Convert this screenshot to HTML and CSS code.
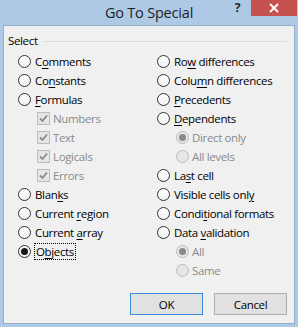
FILE: index.html
```html
<!DOCTYPE html>
<html lang="en">
<head>
    <meta charset="UTF-8">
    <title>Go To Special</title>
    <link rel="stylesheet" href="styles.css">
</head>
<body>
    <div class="window">
        <!-- Title bar -->
        <div class="titlebar">
            <div></div>
            <div class="title">Go To Special</div>
            <div class="caption-buttons">
                <span class="help">?</span>
                <span class="close">
                    <svg viewBox="0 0 10 10" width="10" height="10">
                        <path d="M1 1L9 9M9 1L1 9" stroke="#fff" stroke-width="2"/>
                    </svg>
                </span>
            </div>
        </div>

        <div class="client">
            <div class="group-label"><span>Select</span><span class="line"></span></div>

            <div class="options">
                <div class="col">
                    <label class="opt"><span class="radio"></span><span>C<u>o</u>mments</span></label>
                    <label class="opt"><span class="radio"></span><span>Co<u>n</u>stants</span></label>
                    <label class="opt"><span class="radio"></span><span><u>F</u>ormulas</span></label>
                    <label class="opt sub disabled"><span class="check">
                        <svg viewBox="0 0 11 11" width="11" height="11"><path d="M2 5.5L4.5 8L9 2.5" fill="none" stroke="#8a8a8a" stroke-width="1.8"/></svg>
                    </span><span>Numbers</span></label>
                    <label class="opt sub disabled"><span class="check">
                        <svg viewBox="0 0 11 11" width="11" height="11"><path d="M2 5.5L4.5 8L9 2.5" fill="none" stroke="#8a8a8a" stroke-width="1.8"/></svg>
                    </span><span>Text</span></label>
                    <label class="opt sub disabled"><span class="check">
                        <svg viewBox="0 0 11 11" width="11" height="11"><path d="M2 5.5L4.5 8L9 2.5" fill="none" stroke="#8a8a8a" stroke-width="1.8"/></svg>
                    </span><span>Logicals</span></label>
                    <label class="opt sub disabled"><span class="check">
                        <svg viewBox="0 0 11 11" width="11" height="11"><path d="M2 5.5L4.5 8L9 2.5" fill="none" stroke="#8a8a8a" stroke-width="1.8"/></svg>
                    </span><span>Errors</span></label>
                    <label class="opt"><span class="radio"></span><span>Blan<u>k</u>s</span></label>
                    <label class="opt"><span class="radio"></span><span>Current <u>r</u>egion</span></label>
                    <label class="opt"><span class="radio"></span><span>Current <u>a</u>rray</span></label>
                    <label class="opt"><span class="radio on"></span><span class="focus">O<u>b</u>jects</span></label>
                </div>
                <div class="col">
                    <label class="opt"><span class="radio"></span><span>Ro<u>w</u> differences</span></label>
                    <label class="opt"><span class="radio"></span><span>Colu<u>m</u>n differences</span></label>
                    <label class="opt"><span class="radio"></span><span><u>P</u>recedents</span></label>
                    <label class="opt"><span class="radio"></span><span><u>D</u>ependents</span></label>
                    <label class="opt sub disabled"><span class="radio on"></span><span>Direct only</span></label>
                    <label class="opt sub disabled"><span class="radio"></span><span>All levels</span></label>
                    <label class="opt"><span class="radio"></span><span>La<u>s</u>t cell</span></label>
                    <label class="opt"><span class="radio"></span><span>Visible cells onl<u>y</u></span></label>
                    <label class="opt"><span class="radio"></span><span>Condi<u>t</u>ional formats</span></label>
                    <label class="opt"><span class="radio"></span><span>Data <u>v</u>alidation</span></label>
                    <label class="opt sub disabled"><span class="radio on"></span><span>All</span></label>
                    <label class="opt sub disabled"><span class="radio"></span><span>Same</span></label>
                </div>
            </div>

            <div class="buttons">
                <button class="btn default">OK</button>
                <button class="btn">Cancel</button>
            </div>
        </div>
    </div>
</body>
</html>
```

FILE: styles.css
```css
/* Dialog frame */
body {
    margin: 0;
    font-family: "Open Sans", "Noto Sans", sans-serif;
    font-size: 11.5px;
    letter-spacing: -0.35px;
    color: #000;
}

.window {
    width: 298px;
    height: 327px;
    background-color: #adc9e6;
    display: flex;
    flex-direction: column;
}

/* Title bar */
.titlebar {
    height: 25px;
    display: grid;
    grid-template-columns: 1fr auto 1fr;
    align-items: start;
}

.title {
    font-size: 14.5px;
    letter-spacing: -0.2px;
    line-height: 25px;
    color: #1e1e1e;
}

.caption-buttons {
    display: flex;
    justify-content: flex-end;
    align-items: flex-start;
}

.help {
    font-family: "Noto Sans", sans-serif;
    font-weight: bold;
    font-size: 12px;
    line-height: 16px;
    color: #222;
    margin-right: 11px;
}

.close {
    width: 46px;
    height: 16px;
    margin-right: 1px;
    background-color: #c75050;
    display: flex;
    align-items: center;
    justify-content: center;
}

/* Client area */
.client {
    flex: 1;
    margin: 0 3px 3px;
    background-color: #f0f0f0;
    border: 1px solid #95afc9;
    padding: 7px 7px 0 4px;
}

.group-label {
    display: flex;
    align-items: center;
    line-height: 16px;
}

.group-label .line {
    flex: 1;
    height: 1px;
    background-color: #dcdcdc;
    margin-left: 5px;
}

.options {
    display: grid;
    grid-template-columns: 139px 1fr;
    padding-left: 10px;
    margin-top: 3px;
}

.opt {
    height: 19px;
    display: flex;
    align-items: center;
    white-space: nowrap;
}

.opt u {
    text-decoration-thickness: 1px;
    text-underline-offset: 2px;
}

.opt.sub {
    padding-left: 19px;
}

.disabled {
    color: #8a8a8a;
}

/* Radio buttons */
.radio {
    width: 11px;
    height: 11px;
    border: 1px solid #333;
    border-radius: 50%;
    background: linear-gradient(#fff, #f0f0f0);
    margin-right: 4px;
    display: flex;
    align-items: center;
    justify-content: center;
    flex-shrink: 0;
}

.radio.on::after {
    content: "";
    width: 7px;
    height: 7px;
    border-radius: 50%;
    background-color: #1a1a1a;
}

.disabled .radio {
    border-color: #bcbcbc;
    background: #e6e6e6;
    margin-right: 3px;
}

.disabled .radio.on::after {
    background-color: #8a8a8a;
}

/* Check boxes */
.check {
    width: 11px;
    height: 11px;
    border: 1px solid #bcbcbc;
    background-color: #e6e6e6;
    margin-right: 3px;
    display: flex;
    align-items: center;
    justify-content: center;
}

.focus {
    outline: 1px dotted #000;
    padding: 0 1px;
    line-height: 15px;
}

/* Buttons */
.buttons {
    display: flex;
    justify-content: flex-end;
    gap: 11px;
    margin-top: 13px;
}

.btn {
    width: 73px;
    height: 22px;
    font-family: inherit;
    font-size: 11.5px;
    letter-spacing: -0.35px;
    color: #000;
    background-color: #e1e1e1;
    border: 1px solid #adadad;
    padding: 0;
}

.btn.default {
    border-color: #3c8fe0;
}
```
